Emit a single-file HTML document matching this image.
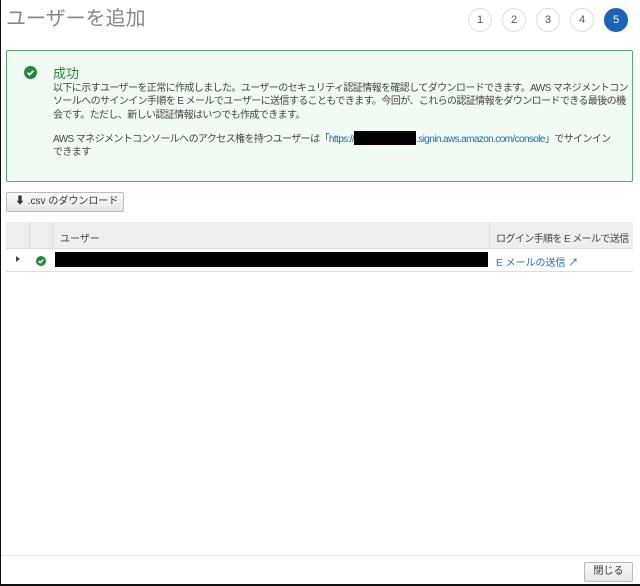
<!DOCTYPE html>
<html><head><meta charset="utf-8"><style>
*{box-sizing:border-box;margin:0;padding:0}
body{width:640px;height:586px;background:#fff;font-family:"Liberation Sans","Noto Sans CJK JP",sans-serif;position:relative;overflow:hidden;color:#333}
.frame{position:absolute;left:0;top:0;width:640px;height:586px;border:1px solid #111;border-right:none;border-top:none;border-bottom:2px solid #111}
.abs{position:absolute}
.title{left:6px;top:2px;font-size:20px;color:#888;letter-spacing:0px}
.step{width:24px;height:24px;border-radius:50%;border:1px solid #ddd;font-size:11px;text-align:center;line-height:22px;color:#555;top:8px}
.alert{left:6px;top:50px;width:627px;height:132px;border:1px solid #5aa86b;background:#f2faf4;border-radius:2px}
.txt{font-size:10px;line-height:13.3px;color:#444;letter-spacing:-0.6px;white-space:nowrap}
a{color:#1a6fb3;text-decoration:none}
.btn{border:1px solid #bbb;background:linear-gradient(#fafafa,#e6e6e6);border-radius:2px;font-size:10px;color:#333}
</style></head><body>
<div class="frame"></div>
<div class="abs title">ユーザーを追加</div>
<div class="abs step" style="left:468px">1</div>
<div class="abs step" style="left:502px">2</div>
<div class="abs step" style="left:536px">3</div>
<div class="abs step" style="left:570px">4</div>
<div class="abs step" style="left:604px;background:#1a63b8;border-color:#1a63b8;color:#fff">5</div>
<div class="abs alert"></div>
<svg class="abs" style="left:24px;top:66px" width="13" height="13" viewBox="0 0 13 13"><circle cx="6.5" cy="6.5" r="6.5" fill="#1e8a3c"/><path d="M3.5 6.7l2 2 4-4" stroke="#fff" stroke-width="1.8" fill="none"/></svg>
<div class="abs" style="left:53px;top:63px;font-size:13px;color:#1e8a3c">成功</div>
<div class="abs txt" style="left:53px;top:82px">以下に示すユーザーを正常に作成しました。ユーザーのセキュリティ認証情報を確認してダウンロードできます。AWS マネジメントコン<br>ソールへのサインイン手順を E メールでユーザーに送信することもできます。今回が、これらの認証情報をダウンロードできる最後の機<br>会です。ただし、新しい認証情報はいつでも作成できます。</div>
<div class="abs txt" style="left:53px;top:131px">AWS マネジメントコンソールへのアクセス権を持つユーザーは「<a>https://<span style="display:inline-block;width:62px;height:14px;background:#000;vertical-align:-3px"></span>.signin.aws.amazon.com/console</a>」でサインイン<br>できます</div>
<div class="abs btn" style="left:6px;top:192px;width:118px;height:20px;line-height:18px;padding-left:8px">⬇ .csv のダウンロード</div>
<div class="abs" style="left:6px;top:222px;width:627px;height:27px;background:#eee;border-bottom:1px solid #ddd"></div>
<div class="abs" style="left:29px;top:222px;width:1px;height:27px;background:#ddd"></div>
<div class="abs" style="left:52px;top:222px;width:1px;height:27px;background:#ddd"></div>
<div class="abs" style="left:489px;top:222px;width:1px;height:27px;background:#ddd"></div>
<div class="abs" style="left:60px;top:230px;font-size:10px;color:#444">ユーザー</div>
<div class="abs" style="left:496px;top:230px;font-size:10px;color:#444;letter-spacing:-0.6px;white-space:nowrap">ログイン手順を E メールで送信</div>
<div class="abs" style="left:6px;top:271px;width:627px;height:1px;background:#ddd"></div>
<div class="abs" style="left:16px;top:256px;width:0;height:0;border-left:4px solid #444;border-top:3px solid transparent;border-bottom:3px solid transparent"></div>
<svg class="abs" style="left:36px;top:256px" width="10" height="10" viewBox="0 0 13 13"><circle cx="6.5" cy="6.5" r="6.5" fill="#1e8a3c"/><path d="M3.5 6.7l2 2 4-4" stroke="#fff" stroke-width="2" fill="none"/></svg>
<div class="abs" style="left:55px;top:252px;width:433px;height:15px;background:#000"></div>
<div class="abs" style="left:496px;top:254px;font-size:10px"><a>E メールの送信 ↗</a></div>
<div class="abs" style="left:1px;top:555px;width:639px;height:1px;background:#e4e4e4"></div>
<div class="abs btn" style="left:584px;top:562px;width:49px;height:20px;line-height:18px;text-align:center">閉じる</div>
</body></html>
